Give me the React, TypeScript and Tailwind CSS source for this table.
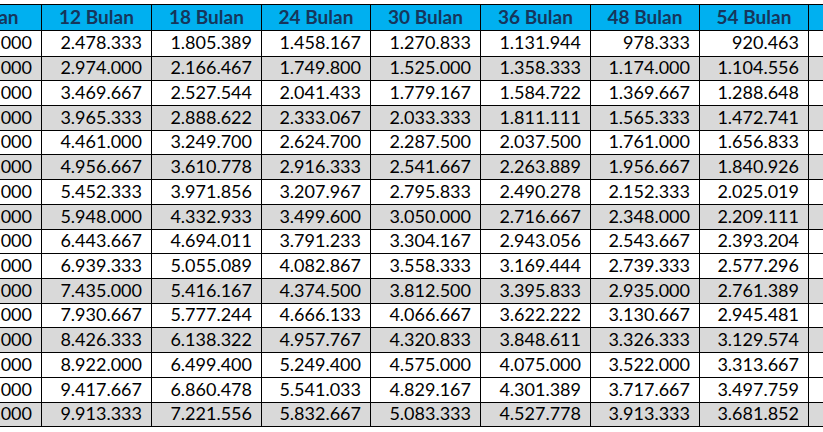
const widths = [110, 110, 110, 109, 110, 110, 109, 109, 110]

const headers = ['Pinjaman', '12 Bulan', '18 Bulan', '24 Bulan', '30 Bulan', '36 Bulan', '48 Bulan', '54 Bulan', '60 Bulan']

const rows: { h: string; gray: boolean; vals: string[] }[] = [
  { h: 'h-[26px]', gray: false, vals: ['25.000.000', '2.478.333', '1.805.389', '1.458.167', '1.270.833', '1.131.944', '978.333', '920.463'] },
  { h: 'h-[24px]', gray: true, vals: ['30.000.000', '2.974.000', '2.166.467', '1.749.800', '1.525.000', '1.358.333', '1.174.000', '1.104.556'] },
  { h: 'h-[25px]', gray: false, vals: ['35.000.000', '3.469.667', '2.527.544', '2.041.433', '1.779.167', '1.584.722', '1.369.667', '1.288.648'] },
  { h: 'h-[25px]', gray: true, vals: ['40.000.000', '3.965.333', '2.888.622', '2.333.067', '2.033.333', '1.811.111', '1.565.333', '1.472.741'] },
  { h: 'h-[24px]', gray: false, vals: ['45.000.000', '4.461.000', '3.249.700', '2.624.700', '2.287.500', '2.037.500', '1.761.000', '1.656.833'] },
  { h: 'h-[25px]', gray: true, vals: ['50.000.000', '4.956.667', '3.610.778', '2.916.333', '2.541.667', '2.263.889', '1.956.667', '1.840.926'] },
  { h: 'h-[25px]', gray: false, vals: ['55.000.000', '5.452.333', '3.971.856', '3.207.967', '2.795.833', '2.490.278', '2.152.333', '2.025.019'] },
  { h: 'h-[25px]', gray: true, vals: ['60.000.000', '5.948.000', '4.332.933', '3.499.600', '3.050.000', '2.716.667', '2.348.000', '2.209.111'] },
  { h: 'h-[24px]', gray: false, vals: ['65.000.000', '6.443.667', '4.694.011', '3.791.233', '3.304.167', '2.943.056', '2.543.667', '2.393.204'] },
  { h: 'h-[25px]', gray: false, vals: ['70.000.000', '6.939.333', '5.055.089', '4.082.867', '3.558.333', '3.169.444', '2.739.333', '2.577.296'] },
  { h: 'h-[25px]', gray: true, vals: ['75.000.000', '7.435.000', '5.416.167', '4.374.500', '3.812.500', '3.395.833', '2.935.000', '2.761.389'] },
  { h: 'h-[24px]', gray: false, vals: ['80.000.000', '7.930.667', '5.777.244', '4.666.133', '4.066.667', '3.622.222', '3.130.667', '2.945.481'] },
  { h: 'h-[25px]', gray: true, vals: ['85.000.000', '8.426.333', '6.138.322', '4.957.767', '4.320.833', '3.848.611', '3.326.333', '3.129.574'] },
  { h: 'h-[25px]', gray: false, vals: ['90.000.000', '8.922.000', '6.499.400', '5.249.400', '4.575.000', '4.075.000', '3.522.000', '3.313.667'] },
  { h: 'h-[25px]', gray: false, vals: ['95.000.000', '9.417.667', '6.860.478', '5.541.033', '4.829.167', '4.301.389', '3.717.667', '3.497.759'] },
  { h: 'h-[24px]', gray: true, vals: ['100.000.000', '9.913.333', '7.221.556', '5.832.667', '5.083.333', '4.527.778', '3.913.333', '3.681.852'] },
]

export default function App() {
  return (
    <div className="w-[823px] h-[432px] overflow-hidden bg-white font-['Lato',sans-serif]">
      <div className="ml-[-68px] mt-[4px] w-max">
        <div className="flex h-[27px] border-y border-black bg-[#00b0f0]">
          {headers.map((t, i) => (
            <div
              key={t}
              style={{ width: widths[i] }}
              className={`flex items-center justify-center border-r border-black text-[19px] font-bold text-[#16365c] leading-none pb-[2px] ${i === 0 ? 'pr-[14px]' : ''}`}
            >
              {t}
            </div>
          ))}
        </div>
        {rows.map((r, ri) => (
          <div key={ri} className={`flex ${r.h} border-b border-black ${r.gray ? 'bg-[#d9d9d9]' : 'bg-white'}`}>
            {widths.map((w, i) => (
              <div
                key={i}
                style={{ width: w }}
                className="flex items-center justify-end border-r border-black pr-[9px] pb-[3px] text-[18px] text-black leading-none"
              >
                {r.vals[i] ?? ''}
              </div>
            ))}
          </div>
        ))}
      </div>
    </div>
  )
}
